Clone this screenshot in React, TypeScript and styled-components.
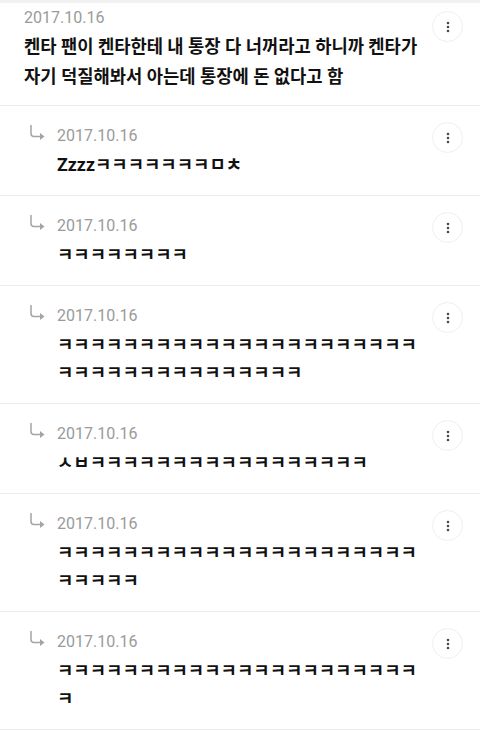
import React from 'react';
import styled, { createGlobalStyle } from 'styled-components';

const GlobalStyle = createGlobalStyle`
  html, body {
    margin: 0;
    padding: 0;
    background: #fff;
  }
  body {
    font-family: Roboto, "Noto Sans CJK KR", sans-serif;
  }
`;

const Page = styled.div`
  width: 480px;
  border-top: 3px solid #f1f1f1;
`;

const Post = styled.div<{ $reply?: boolean }>`
  display: flex;
  align-items: flex-start;
  padding: ${p => (p.$reply ? '20px 17px 16px 29px' : '5px 17px 13px 24px')};
  border-bottom: 1px solid #ececec;
`;

const ReplyArrow = styled.div`
  width: 28px;
  height: 20px;
  flex-shrink: 0;
  display: flex;
  align-items: flex-start;
  color: #a4a4a4;

  svg {
    margin-top: -1px;
  }
`;

const Body = styled.div`
  flex: 1;
  min-width: 0;
  display: flex;
  flex-direction: column;
`;

const DateText = styled.div`
  font-family: Roboto, sans-serif;
  font-size: 16px;
  line-height: 20px;
  color: #9a9a9a;
`;

const Content = styled.div<{ $reply?: boolean }>`
  margin-top: ${p => (p.$reply ? '5px' : '4px')};
  font-family: Roboto, "Noto Sans CJK KR", sans-serif;
  font-weight: 700;
  font-size: ${p => (p.$reply ? '17.8px' : '17.7px')};
  line-height: ${p => (p.$reply ? '28px' : '30px')};
  color: #111;
  word-break: break-all;
`;

const MenuButton = styled.button<{ $reply?: boolean }>`
  flex-shrink: 0;
  width: 31px;
  height: 31px;
  margin-top: ${p => (p.$reply ? '-4px' : '3px')};
  border-radius: 50%;
  border: 1px solid #efefef;
  background: #fff;
  padding: 0;
  display: flex;
  align-items: center;
  justify-content: center;
  color: #4a4a4a;
`;

function Dots() {
  return (
    <svg width="4" height="12" viewBox="0 0 4 12">
      <circle cx="2" cy="2" r="1.3" fill="currentColor" />
      <circle cx="2" cy="6" r="1.3" fill="currentColor" />
      <circle cx="2" cy="10" r="1.3" fill="currentColor" />
    </svg>
  );
}

function Arrow() {
  return (
    <svg width="17" height="16" viewBox="0 0 17 16">
      <path d="M2 0 V8.5 Q2 11.5 5 11.5 H12.5" fill="none" stroke="currentColor" strokeWidth="1.5" />
      <path d="M11 8 L15.5 11.5 L11 15 Z" fill="currentColor" stroke="none" />
    </svg>
  );
}

const date = '2017.10.16';

const replies = [
  'Zzzzㅋㅋㅋㅋㅋㅋㅋㅁㅊ',
  'ㅋㅋㅋㅋㅋㅋㅋㅋ',
  'ㅋㅋㅋㅋㅋㅋㅋㅋㅋㅋㅋㅋㅋㅋㅋㅋㅋㅋㅋㅋㅋㅋ\nㅋㅋㅋㅋㅋㅋㅋㅋㅋㅋㅋㅋㅋㅋㅋ',
  'ㅅㅂㅋㅋㅋㅋㅋㅋㅋㅋㅋㅋㅋㅋㅋㅋㅋㅋㅋ',
  'ㅋㅋㅋㅋㅋㅋㅋㅋㅋㅋㅋㅋㅋㅋㅋㅋㅋㅋㅋㅋㅋㅋ\nㅋㅋㅋㅋㅋ',
  'ㅋㅋㅋㅋㅋㅋㅋㅋㅋㅋㅋㅋㅋㅋㅋㅋㅋㅋㅋㅋㅋㅋ\nㅋ',
];

const Line = styled.span`
  display: block;
  white-space: nowrap;
`;

export default function App() {
  return (
    <Page>
      <GlobalStyle />
      <Post>
        <Body>
          <DateText>{date}</DateText>
          <Content>
            <Line>켄타 팬이 켄타한테 내 통장 다 너꺼라고 하니까 켄타가</Line>
            <Line>자기 덕질해봐서 아는데 통장에 돈 없다고 함</Line>
          </Content>
        </Body>
        <MenuButton>
          <Dots />
        </MenuButton>
      </Post>
      {replies.map((text, i) => (
        <Post $reply key={i}>
          <ReplyArrow>
            <Arrow />
          </ReplyArrow>
          <Body>
            <DateText>{date}</DateText>
            <Content $reply>
              {text.split('\n').map((l, j) => (
                <Line key={j}>{l}</Line>
              ))}
            </Content>
          </Body>
          <MenuButton $reply>
            <Dots />
          </MenuButton>
        </Post>
      ))}
    </Page>
  );
}
